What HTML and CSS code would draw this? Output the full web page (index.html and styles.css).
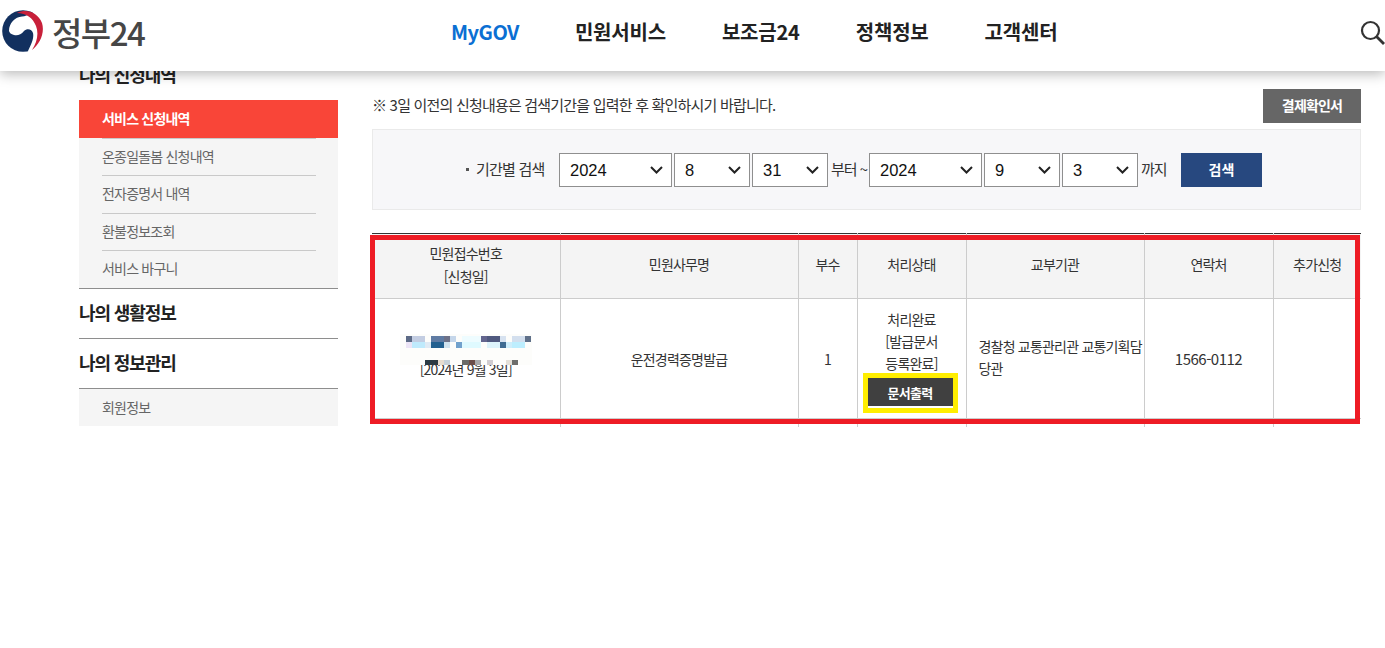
FILE: index.html
```html
<!DOCTYPE html>
<html lang="ko">
<head>
<meta charset="UTF-8">
<meta name="viewport" content="width=device-width, initial-scale=1.0">
<title>정부24</title>
<link rel="stylesheet" href="styles.css">
</head>
<body>

<!-- header -->
<header class="site-header">
  <div class="logo">
    <svg class="emblem" width="44" height="44" viewBox="0 0 44 44">
      <circle cx="21" cy="21" r="20.800" fill="#12305f"/>
      <path d="M7 21C7 13 13 7 20 6.500C23 6.300 26 5 28 4L46 0L46 44L28 44L26 41C30 33 32 28 31 23C30 19 25 18 22 21C19 25 15 26 12 25C9 24 7.500 23 7 21Z" fill="#fff"/>
      <path d="M15 3C25-2 36 3 40 13C43 23 38 34 30 40C35 32 37 24 34 16C31 8 24 3 15 3Z" fill="#c8203a"/>
    </svg>
    <span class="logo-text">정부24</span>
  </div>
  <nav class="gnb">
    <a class="gnb-item on">MyGOV</a>
    <a class="gnb-item">민원서비스</a>
    <a class="gnb-item">보조금24</a>
    <a class="gnb-item">정책정보</a>
    <a class="gnb-item">고객센터</a>
  </nav>
  <svg class="search-icon" width="26" height="26" viewBox="0 0 26 26">
    <circle cx="10.500" cy="10.500" r="8.500" fill="none" stroke="#333" stroke-width="2.200"/>
    <path d="M16.500 16.500L24 24" stroke="#333" stroke-width="2.800" fill="none"/>
  </svg>
</header>

<div class="container">
  <!-- side menu -->
  <aside class="side">
    <h3 class="side-title">나의 신청내역</h3>
    <ul class="side-list first">
      <li class="side-item on">서비스 신청내역</li>
      <li class="side-item">온종일돌봄 신청내역</li>
      <li class="side-item">전자증명서 내역</li>
      <li class="side-item">환불정보조회</li>
      <li class="side-item">서비스 바구니</li>
    </ul>
    <h3 class="side-title line">나의 생활정보</h3>
    <h3 class="side-title line">나의 정보관리</h3>
    <ul class="side-list">
      <li class="side-item">회원정보</li>
    </ul>
  </aside>

  <!-- content -->
  <main class="content">
    <div class="notice-row">
      <p class="notice">※ 3일 이전의 신청내용은 검색기간을 입력한 후 확인하시기 바랍니다.</p>
      <button class="btn-receipt">결제확인서</button>
    </div>

    <div class="search-box">
      <span class="search-label">기간별 검색</span>
      <select class="sel-year"><option>2024</option></select>
      <select class="sel-md"><option>8</option></select>
      <select class="sel-md"><option>31</option></select>
      <span class="search-txt">부터 ~</span>
      <select class="sel-year"><option>2024</option></select>
      <select class="sel-md"><option>9</option></select>
      <select class="sel-md"><option>3</option></select>
      <span class="search-txt end">까지</span>
      <button class="btn-search">검색</button>
    </div>

    <div class="table-wrap">
      <table class="list">
        <colgroup>
          <col class="c1"><col class="c2"><col class="c3"><col class="c4"><col class="c5"><col class="c6"><col class="c7">
        </colgroup>
        <thead>
          <tr>
            <th>민원접수번호<br>[신청일]</th>
            <th>민원사무명</th>
            <th>부수</th>
            <th>처리상태</th>
            <th>교부기관</th>
            <th>연락처</th>
            <th>추가신청</th>
          </tr>
        </thead>
        <tbody>
          <tr class="row">
            <td class="date-cell">
              <svg class="mosaic" width="132" height="31" viewBox="0 0 132 31">
                <rect x="0" y="0" width="132" height="31" fill="#fdfdfb"/>
                <rect x="6" y="2" width="6" height="6" fill="#5c6a86"/>
                <rect x="12" y="2" width="13" height="6" fill="#c3cde2"/>
                <rect x="31" y="2" width="13" height="6" fill="#5f7ba3"/>
                <rect x="44" y="2" width="6" height="6" fill="#6d7188"/>
                <rect x="50" y="2" width="6" height="6" fill="#c5d6ea"/>
                <rect x="62" y="2" width="20" height="6" fill="#eefcff"/>
                <rect x="81" y="2" width="6" height="6" fill="#63658e"/>
                <rect x="87" y="2" width="13" height="6" fill="#50597f"/>
                <rect x="100" y="2" width="6" height="6" fill="#d7e2f0"/>
                <rect x="112" y="2" width="13" height="6" fill="#d3dfee"/>
                <rect x="125" y="2" width="6" height="6" fill="#5f7089"/>
                <rect x="6" y="8" width="6" height="6" fill="#ece4f6"/>
                <rect x="12" y="8" width="13" height="6" fill="#bfeafc"/>
                <rect x="25" y="8" width="6" height="6" fill="#dfeaf4"/>
                <rect x="31" y="8" width="13" height="6" fill="#23608f"/>
                <rect x="44" y="8" width="6" height="6" fill="#cfe2ee"/>
                <rect x="56" y="8" width="6" height="6" fill="#71a1cc"/>
                <rect x="62" y="8" width="19" height="6" fill="#dffaff"/>
                <rect x="87" y="8" width="13" height="6" fill="#ddf3fb"/>
                <rect x="100" y="8" width="6" height="6" fill="#3f6b92"/>
                <rect x="106" y="8" width="6" height="6" fill="#cfeefb"/>
                <rect x="112" y="8" width="13" height="6" fill="#bdeefe"/>
                <rect x="25" y="26" width="13" height="5" fill="#2c3b44"/>
                <rect x="38" y="26" width="6" height="5" fill="#e6dccf"/>
                <rect x="44" y="26" width="6" height="5" fill="#c5d0d8"/>
                <rect x="62" y="26" width="7" height="5" fill="#6a6a68"/>
                <rect x="69" y="26" width="6" height="5" fill="#6b4c48"/>
                <rect x="75" y="26" width="6" height="5" fill="#a8a8aa"/>
                <rect x="87" y="26" width="6" height="5" fill="#d0ccd0"/>
                <rect x="106" y="26" width="6" height="5" fill="#e4e0d8"/>
                <rect x="112" y="26" width="6" height="5" fill="#6e6e6c"/>
              </svg>
              <span class="date-text">[2024년 9월 3일]</span>
            </td>
            <td>운전경력증명발급</td>
            <td>1</td>
            <td class="state-cell">
              처리완료<br>[발급문서<br>등록완료]
              <button class="btn-print">문서출력</button>
            </td>
            <td class="left">경찰청 교통관리관 교통기획담당관</td>
            <td class="tel">1566-0112</td>
            <td></td>
          </tr>
          <tr class="stub"><td></td><td></td><td></td><td></td><td></td><td></td><td></td></tr>
        </tbody>
      </table>
      <div class="red-mark"></div>
    </div>
  </main>
</div>

</body>
</html>
```

FILE: styles.css
```css
* {
  box-sizing: border-box;
}

html, body {
  height: 648px;
  overflow: hidden;
}

body {
  margin: 0;
  background-color: #fff;
  color: #333;
  font-family: "Noto Sans CJK KR", "Noto Sans", sans-serif;
  font-size: 14px;
  letter-spacing: -0.8px;
}

/* header */
.site-header {
  position: relative;
  z-index: 2;
  display: flex;
  align-items: center;
  height: 71px;
  padding-bottom: 7px;
  background-color: #fff;
  box-shadow: 0 3px 12px rgba(0,0,0,0.28);
}

.logo {
  display: flex;
  align-items: center;
  gap: 6px;
  width: 451px;
  padding-left: 2px;
}

.logo-text {
  color: #464646;
  font-size: 33px;
  font-weight: 500;
  letter-spacing: -1.5px;
  line-height: 40px;
}

.gnb {
  display: flex;
  gap: 56px;
}

.gnb-item {
  color: #222;
  font-size: 20px;
  font-weight: 700;
  letter-spacing: -0.2px;
  line-height: 28px;
}

.gnb-item.on {
  color: #0b6fd3;
  letter-spacing: -0.5px;
}

.search-icon {
  position: absolute;
  top: 20px;
  right: -1px;
}

/* layout */
.container {
  display: flex;
  gap: 34px;
  padding-left: 79px;
}

/* side menu */
.side {
  width: 259px;
  margin-top: -21px;
}

.side-title {
  display: flex;
  align-items: center;
  height: 50px;
  margin: 0;
  padding-bottom: 2px;
  color: #222;
  font-size: 18px;
  font-weight: 700;
  letter-spacing: -1.1px;
}

.side-title.line {
  border-bottom: 1px solid #8e8e8e;
}

.side-list {
  margin: 0;
  padding: 0;
  list-style: none;
  background-color: #f5f5f5;
}

.side-list.first {
  border-bottom: 1px solid #8e8e8e;
}

.side-item {
  position: relative;
  height: 37.500px;
  padding-left: 23px;
  color: #666;
  font-size: 14px;
  line-height: 37px;
}

.side-item + .side-item::before {
  content: "";
  position: absolute;
  top: 0;
  left: 23px;
  right: 22px;
  height: 1px;
  background-color: #c9c9c9;
}

.side-item.on {
  background-color: #f94538;
  color: #fff;
  font-weight: 700;
}

/* content */
.content {
  width: 989px;
}

.notice-row {
  display: flex;
  align-items: center;
  justify-content: space-between;
  height: 34px;
  margin-top: 18px;
}

.notice {
  margin: -4px 0 0;
  font-size: 15px;
  letter-spacing: -0.8px;
}

.btn-receipt {
  width: 98px;
  height: 34px;
  margin: 0;
  padding: 0 0 2px;
  border: 0;
  background-color: #666;
  color: #fff;
  font-family: inherit;
  font-size: 14px;
  font-weight: 700;
  letter-spacing: -0.8px;
}

/* search */
.search-box {
  display: flex;
  align-items: center;
  height: 81px;
  margin-top: 6px;
  padding-left: 93px;
  border: 1px solid #eaeaea;
  background-color: #f7f7f9;
}

.search-label {
  position: relative;
  width: 93px;
  margin-top: -3px;
  padding-left: 10px;
  font-size: 15px;
  letter-spacing: -0.8px;
}

.search-label::before {
  content: "";
  position: absolute;
  top: 10px;
  left: 0;
  width: 3px;
  height: 3px;
  background-color: #555;
}

.search-box select {
  height: 34px;
  margin: 0 2px 0 0;
  padding: 0 0 0 10px;
  border: 1px solid #8f8f8f;
  border-radius: 0;
  background: #fff url("data:image/svg+xml,%3Csvg xmlns='http://www.w3.org/2000/svg' width='13' height='8'%3E%3Cpath d='M1 1l5.500 5.500L12 1' fill='none' stroke='%23222' stroke-width='2'/%3E%3C/svg%3E") no-repeat right 8px center;
  color: #111;
  font-family: "Liberation Sans", sans-serif;
  font-size: 16.500px;
  letter-spacing: 0;
  appearance: none;
}

.sel-year {
  width: 113px;
}

.sel-md {
  width: 76px;
}

.search-txt {
  width: 38px;
  margin: -3px 0 0 1px;
  font-size: 15px;
  letter-spacing: -1px;
  white-space: nowrap;
}

.search-txt.end {
  width: 40px;
}

.btn-search {
  width: 81px;
  height: 34px;
  margin: 0;
  padding: 0 0 2px;
  border: 0;
  background-color: #27487f;
  color: #fff;
  font-family: inherit;
  font-size: 14px;
  font-weight: 700;
}

/* table */
.table-wrap {
  position: relative;
  margin-top: 23px;
}

.list {
  width: 989px;
  border-collapse: collapse;
  table-layout: fixed;
  border-top: 1px solid #333;
}

.c1 { width: 188px; }
.c2 { width: 238px; }
.c3 { width: 59px; }
.c4 { width: 109px; }
.c5 { width: 178px; }
.c6 { width: 129px; }
.c7 { width: 88px; }

.list th {
  height: 65px;
  padding: 0 0 3px;
  border-right: 1px solid #ccc;
  border-bottom: 1px solid #ccc;
  background-color: #f4f4f4;
  font-size: 14px;
  font-weight: 400;
  line-height: 23px;
}

.list td {
  padding: 0;
  border-right: 1px solid #ccc;
  text-align: center;
  font-size: 14px;
  line-height: 22px;
}

.list th:last-child,
.list td:last-child {
  border-right: 0;
}

.list .row td {
  height: 120px;
  border-bottom: 1px solid #ccc;
}

.list .stub td {
  height: 8px;
}

.list td.left {
  padding: 0 0 4px 12px;
  text-align: left;
}

.list td.tel {
  font-size: 15px;
  letter-spacing: -0.5px;
}

.date-cell {
  position: relative;
}

.date-text {
  position: relative;
  top: 10px;
}

.mosaic {
  position: absolute;
  top: 35px;
  left: 28px;
  z-index: 1;
}

.list td.state-cell {
  padding-top: 9px;
  vertical-align: top;
}

.btn-print {
  display: block;
  width: 85px;
  height: 28px;
  margin: 4px 0 0 10px;
  padding: 0;
  border: 0;
  border-bottom: 2px solid #fff;
  background-color: #404040;
  color: #fff;
  font-family: inherit;
  font-size: 13px;
  font-weight: 700;
  letter-spacing: -0.7px;
  box-sizing: content-box;
  box-shadow: 0 0 0 5px #ffee00;
}

/* red box drawn over the table */
.red-mark {
  position: absolute;
  top: 2px;
  left: -2px;
  width: 990px;
  height: 189px;
  border: 5px solid #ee1c25;
}
```
